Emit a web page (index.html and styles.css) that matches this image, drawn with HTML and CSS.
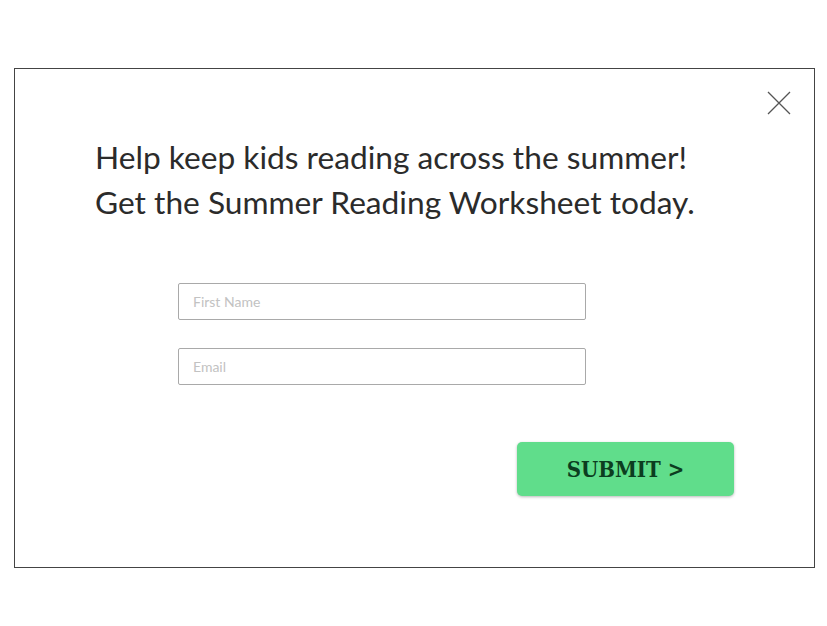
FILE: index.html
```html
<!DOCTYPE html>
<html>
<head>
<meta charset="utf-8">
<link rel="stylesheet" href="styles.css">
</head>
<body>
<div class="modal">
  <button class="close" aria-label="Close">
    <svg width="24" height="24" viewBox="0 0 24 24"><path d="M1 1L23 23M23 1L1 23" stroke="#555" stroke-width="1.3" fill="none"/></svg>
  </button>
  <h1 class="title">Help keep kids reading across the summer!<br>Get the Summer Reading Worksheet today.</h1>
  <form class="form">
    <input class="field" type="text" placeholder="First Name">
    <input class="field" type="email" placeholder="Email">
    <div class="actions">
      <button class="submit" type="button">SUBMIT &gt;</button>
    </div>
  </form>
</div>
</body>
</html>
```
FILE: styles.css
```css
html, body { margin: 0; padding: 0; background: #fff; }
body { padding: 68px 13px 0 14px; }
.modal {
  position: relative;
  box-sizing: border-box;
  width: 801px;
  height: 500px;
  border: 1px solid #444;
  padding: 66px 0 0 80px;
}
.close {
  position: absolute;
  top: 22px;
  right: 23px;
  padding: 0;
  border: 0;
  background: none;
  width: 24px;
  height: 24px;
}
.close svg { display: block; }
.title {
  margin: 0;
  font-family: Lato, "Open Sans", sans-serif;
  font-weight: 400;
  font-size: 31.7px;
  line-height: 45px;
  color: #2b2b2b;
  white-space: nowrap;
}
.form {
  display: flex;
  flex-direction: column;
  gap: 28px;
  margin: 58px 0 0 83px;
  width: 408px;
}
.field {
  box-sizing: border-box;
  width: 408px;
  height: 37px;
  border: 1px solid #a9a9a9;
  border-radius: 2px;
  padding: 0 14px;
  font-family: Lato, sans-serif;
  font-size: 14px;
  outline: none;
}
.field::placeholder { color: #c2c2c2; }
.actions {
  display: flex;
  justify-content: flex-end;
  margin-top: 29px;
  width: 556px;
}
.submit {
  width: 217px;
  height: 54px;
  border: 0;
  border-radius: 5px;
  background: #60dd8b;
  box-shadow: 0 1px 3px rgba(0,0,0,0.28);
  font-family: "DejaVu Serif Condensed", "DejaVu Serif", serif;
  font-weight: 700;
  font-size: 22px;
  color: #0c3d20;
  padding: 0;
}
```
